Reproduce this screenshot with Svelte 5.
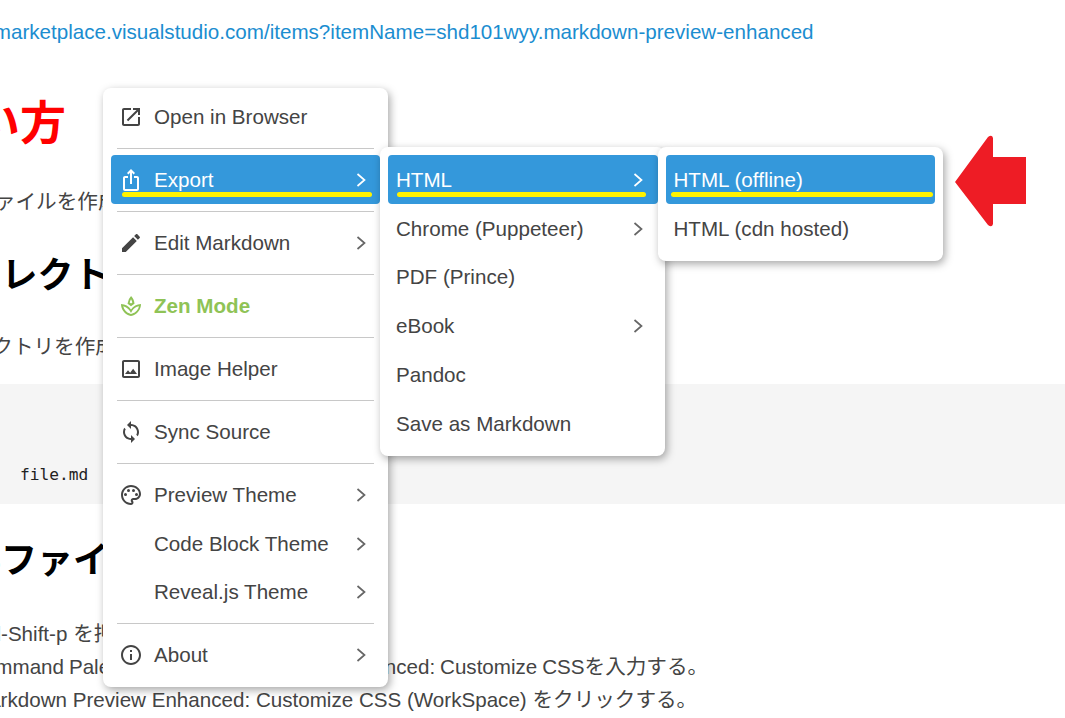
<script>
  const icons = {
    open: "M19 19H5V5h7V3H5c-1.11 0-2 .9-2 2v14c0 1.1.89 2 2 2h14c1.1 0 2-.9 2-2v-7h-2v7zM14 3v2h3.59l-9.83 9.83 1.41 1.41L19 6.41V10h2V3h-7z",
    share: "M16 5l-1.42 1.42-1.59-1.59V16h-1.98V4.83L9.42 6.42 8 5l4-4 4 4zm4 5v11c0 1.1-.9 2-2 2H6c-1.11 0-2-.9-2-2V10c0-1.11.89-2 2-2h3v2H6v11h12V10h-3V8h3c1.1 0 2 .89 2 2z",
    edit: "M3 17.25V21h3.75L17.81 9.94l-3.75-3.75L3 17.25zM20.71 7.04c.39-.39.39-1.02 0-1.41l-2.34-2.34c-.39-.39-1.02-.39-1.41 0l-1.83 1.83 3.75 3.75 1.83-1.83z",
    spa: "M15.49 9.63c-.18-2.79-1.31-5.51-3.43-7.63a12.188 12.188 0 0 0-3.55 7.63c1.28.68 2.46 1.56 3.49 2.63 1.03-1.06 2.21-1.94 3.49-2.63zm-3.44-4.44c.63 1.03 1.07 2.18 1.3 3.38-.47.3-.91.63-1.34.98-.42-.34-.87-.67-1.33-.97.25-1.2.71-2.35 1.37-3.39zM12 15.45C9.85 12.17 6.18 10 2 10c0 5.32 3.36 9.82 8.03 11.49.63.23 1.29.4 1.97.51.68-.12 1.33-.29 1.97-.51C18.64 19.82 22 15.32 22 10c-4.18 0-7.85 2.18-10 5.45zm1.32 4.15c-.44.15-.88.27-1.33.37-.44-.09-.87-.21-1.28-.36-3.29-1.18-5.7-3.99-6.45-7.35 2.63.63 4.94 2.25 6.42 4.55L12 19.1l1.32-2.55c1.48-2.3 3.79-3.72 6.69-4.34-.75 3.37-3.15 6.18-6.69 7.39z",
    image: "M19 5v14H5V5h14m0-2H5c-1.1 0-2 .9-2 2v14c0 1.1.9 2 2 2h14c1.1 0 2-.9 2-2V5c0-1.1-.9-2-2-2zm-4.86 8.86l-3 3.87L9 13.14 6 17h12l-3.86-5.14z",
    sync: "M12 4V1L8 5l4 4V6c3.31 0 6 2.69 6 6 0 1.01-.25 1.97-.7 2.8l1.46 1.46C19.54 15.03 20 13.57 20 12c0-4.42-3.58-8-8-8zm0 14c-3.31 0-6-2.69-6-6 0-1.01.25-1.97.7-2.8L5.24 7.74C4.46 8.97 4 10.43 4 12c0 4.42 3.58 8 8 8v3l4-4-4-4v3z",
    palette: "M12 22C6.49 22 2 17.51 2 12S6.49 2 12 2s10 4.04 10 9c0 3.31-2.69 6-6 6h-1.77c-.28 0-.5.22-.5.5 0 .12.05.23.13.33.41.47.64 1.06.64 1.67 0 1.38-1.12 2.5-2.5 2.5zm0-18c-4.41 0-8 3.59-8 8s3.59 8 8 8c.28 0 .5-.22.5-.5 0-.16-.08-.28-.14-.35-.41-.46-.63-1.05-.63-1.65 0-1.38 1.12-2.5 2.5-2.5H16c2.21 0 4-1.79 4-4 0-3.86-3.59-7-8-7zM5 11.5a1.5 1.5 0 1 0 3 0 1.5 1.5 0 1 0-3 0zM8 7.5a1.5 1.5 0 1 0 3 0 1.5 1.5 0 1 0-3 0zM13 7.5a1.5 1.5 0 1 0 3 0 1.5 1.5 0 1 0-3 0zM16 11.5a1.5 1.5 0 1 0 3 0 1.5 1.5 0 1 0-3 0z",
    info: "M11 7h2v2h-2zm0 4h2v6h-2zm1-9C6.48 2 2 6.48 2 12s4.48 10 10 10 10-4.48 10-10S17.52 2 12 2zm0 18c-4.41 0-8-3.59-8-8s3.59-8 8-8 8 3.59 8 8-3.59 8-8 8z",
  };

  const mainMenu = [
    { label: "Open in Browser", icon: "open" },
    { sep: true },
    { label: "Export", icon: "share", more: true, active: true },
    { sep: true },
    { label: "Edit Markdown", icon: "edit", more: true },
    { sep: true },
    { label: "Zen Mode", icon: "spa", zen: true },
    { sep: true },
    { label: "Image Helper", icon: "image" },
    { sep: true },
    { label: "Sync Source", icon: "sync" },
    { sep: true },
    { label: "Preview Theme", icon: "palette", more: true },
    { label: "Code Block Theme", more: true, blank: true },
    { label: "Reveal.js Theme", more: true, blank: true },
    { sep: true },
    { label: "About", icon: "info", more: true },
  ];

  const exportMenu = [
    { label: "HTML", more: true, active: true },
    { label: "Chrome (Puppeteer)", more: true },
    { label: "PDF (Prince)" },
    { label: "eBook", more: true },
    { label: "Pandoc" },
    { label: "Save as Markdown" },
  ];

  const htmlMenu = [
    { label: "HTML (offline)", active: true },
    { label: "HTML (cdn hosted)" },
  ];
</script>

{#snippet rows(items)}
  {#each items as item}
    {#if item.sep}
      <div class="sep"></div>
    {:else}
      <div class="row" class:active={item.active} class:zen={item.zen}>
        {#if item.icon}
          <svg class="icon" viewBox="0 0 24 24"><path d={icons[item.icon]} /></svg>
        {:else if item.blank}
          <span class="icon"></span>
        {/if}
        <span class="label">{item.label}</span>
        {#if item.more}
          <svg class="chevron" viewBox="0 0 10 14"><path d="M1.5 1 L8.5 7 L1.5 13" /></svg>
        {/if}
        {#if item.active}<span class="mark"></span>{/if}
      </div>
    {/if}
  {/each}
{/snippet}

<div class="page">
  <article class="doc">
    <p class="link">https://marketplace.visualstudio.com/items?itemName=shd101wyy.markdown-preview-enhanced</p>
    <h1>使い方</h1>
    <p class="first">CSSファイルを作成</p>
    <h2 class="dir">ディレクトリ</h2>
    <p class="second">ディレクトリを作成</p>
    <pre><code>file.md</code></pre>
    <h2 class="file">CSSファイル</h2>
    <ol>
      <li>Ctrl-Shift-p を押す</li>
      <li class="palette">Command Paletteに Markdown Preview Enhanced: Customize CSSを入力する。</li>
      <li>Markdown Preview Enhanced: Customize CSS (WorkSpace) をクリックする。</li>
    </ol>
  </article>

  <div class="menu main">{@render rows(mainMenu)}</div>
  <div class="menu sub-export">{@render rows(exportMenu)}</div>
  <div class="menu sub-html">{@render rows(htmlMenu)}</div>

  <svg class="arrow" viewBox="0 0 72 92">
    <path d="M0 47 L33 2 Q37 -1 38 3 V22 H71 V69 H38 V89 Q37 93 33 90 Z" />
  </svg>
</div>

<style>
  :global(body) {
    margin: 0;
    overflow: hidden;
    background: #fff;
  }

  .page {
    position: relative;
    width: 1065px;
    height: 718px;
    overflow: hidden;
    font-family: "Liberation Sans", "Noto Sans CJK JP", sans-serif;
    font-size: 20.6px;
    color: #444;
  }

  .doc {
    margin-left: -68px;
    width: 1133px;
    line-height: 33px;
  }

  .doc p,
  .doc h2,
  .doc pre,
  .doc ol {
    margin: 0;
  }

  .link {
    padding-top: 15px;
    color: #1b8dd0;
    white-space: nowrap;
  }

  h1 {
    margin: 45px 0 0 -4px;
    font-size: 46px;
    line-height: 60px;
    color: #f00;
  }

  h2 {
    font-size: 36px;
    line-height: 44px;
    color: #000;
  }

  .first {
    margin-top: 32px !important;
  }

  .dir {
    margin-top: 36px !important;
  }

  .second {
    margin-top: 32px !important;
  }

  pre {
    margin-top: 21px !important;
    height: 120px;
    box-sizing: border-box;
    padding: 75px 0 0 88px;
    background: #f5f5f5;
    font-family: "DejaVu Sans Mono", monospace;
    font-size: 16.2px;
    line-height: 32px;
    color: #222;
  }

  .file {
    margin: 35px 0 0 -5px !important;
  }

  ol {
    margin-top: 33.5px !important;
    padding-left: 40px;
    list-style: none;
    white-space: nowrap;
  }

  ol li:nth-child(-n + 2) {
    margin-left: -3px;
  }

  .palette {
    word-spacing: -0.8px;
  }

  .menu {
    position: absolute;
    box-sizing: border-box;
    width: 285px;
    padding: 8px 0;
    background: #fff;
    border-radius: 8px;
    box-shadow: 2px 3px 8px rgba(0, 0, 0, 0.35);
  }

  .main {
    left: 103px;
    top: 88px;
    padding: 4.5px 0 7px;
    z-index: 1;
  }

  .sub-export {
    left: 380px;
    top: 147px;
    padding-bottom: 7.5px;
    z-index: 2;
  }

  .sub-html {
    left: 657.5px;
    top: 147px;
    padding-bottom: 7.5px;
    z-index: 3;
  }

  .row {
    position: relative;
    display: flex;
    align-items: center;
    height: 48.8px;
    margin: 0 8px;
    padding: 0 8px;
    border-radius: 4px;
  }

  .sub-export .row:first-child,
  .sub-html .row:first-child {
    height: 49.3px;
  }

  .sub-export .row {
    margin-right: 7px;
  }

  .row.active {
    background: #3498db;
    color: #fff;
  }

  .row.zen {
    color: #8fc356;
    font-weight: bold;
  }

  .label {
    flex: 1;
    white-space: nowrap;
  }

  .icon {
    flex: none;
    width: 24px;
    height: 24px;
    margin: 0 11px 0 0;
    fill: #444;
  }

  .active .icon {
    fill: #fff;
  }

  .zen .icon {
    fill: #8fc356;
  }

  .chevron {
    flex: none;
    width: 10px;
    height: 14px;
    margin-right: 6.5px;
    fill: none;
    stroke: #666;
    stroke-width: 1.7;
  }

  .sub-export .chevron {
    margin-right: 7.5px;
  }

  .active .chevron {
    stroke: #fff;
  }

  .mark {
    position: absolute;
    left: 11px;
    right: 8px;
    bottom: 7px;
    height: 5px;
    border-radius: 3px;
    background: #fff200;
  }

  .sub-export .mark {
    left: 9px;
    right: 12px;
  }

  .sub-html .mark {
    left: 5px;
    right: 2px;
  }

  .sep {
    height: 1.4px;
    margin: 6.4px 14px;
    background: #c8c8c8;
  }

  .arrow {
    position: absolute;
    left: 955px;
    top: 135px;
    width: 72px;
    height: 92px;
    fill: #ee1c25;
  }
</style>
